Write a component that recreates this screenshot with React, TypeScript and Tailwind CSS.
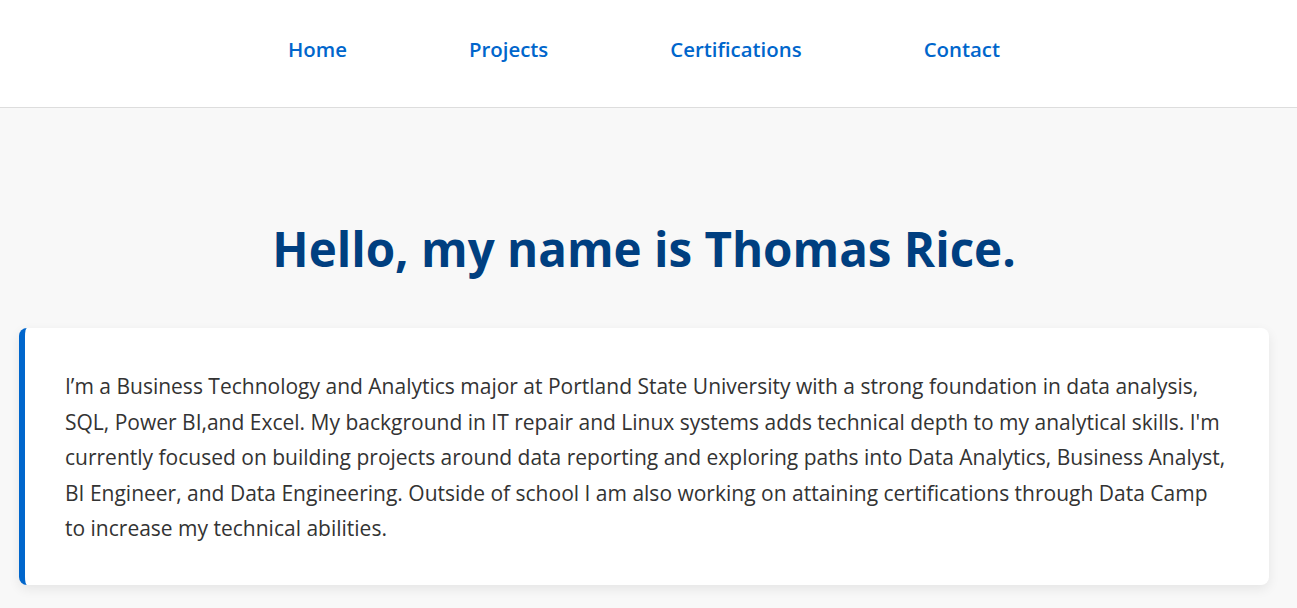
const NAV = ['Home', 'Projects', 'Certifications', 'Contact'];

export default function App() {
  return (
    <div className="min-h-screen bg-[#f8f8f8] font-['Segoe_UI','Open_Sans',sans-serif] text-[#333]">
      {/* header */}
      <header className="border-b border-[#ddd] bg-white">
        <nav className="flex h-[107px] items-center justify-center gap-[122px] pr-[9px] pb-[9px]">
          {NAV.map((item) => (
            <a key={item} href="#" className="text-[20.4px] font-semibold text-[#0066cc]">
              {item}
            </a>
          ))}
        </nav>
      </header>

      {/* intro */}
      <main className="pl-[19px] pr-[28px] pt-[112px]">
        <h1 className="text-center text-[47.5px] font-bold leading-[1.2] text-[#003f80]">
          Hello, my name is Thomas Rice.
        </h1>
        <div className="mt-[51px] rounded-lg border-l-[6px] border-[#0066cc] bg-white px-[40px] pt-[41px] pb-[38px] shadow-[0_4px_12px_rgba(0,0,0,0.08)]">
          <p className="text-[21px] leading-[35.5px]">
            I’m a Business Technology and Analytics major at Portland State University with a strong foundation in data analysis, SQL, Power BI,and Excel. My background in IT repair and Linux systems adds technical depth to my analytical skills. I'm currently focused on building projects around data reporting and exploring paths into Data Analytics, Business Analyst, BI Engineer, and Data Engineering. Outside of school I am also working on attaining certifications through Data Camp to increase my technical abilities.
          </p>
        </div>
      </main>
    </div>
  );
}
